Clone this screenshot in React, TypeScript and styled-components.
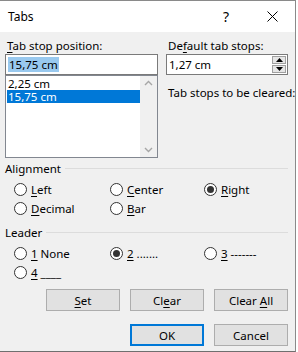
import styled, { createGlobalStyle } from "styled-components";

const Global = createGlobalStyle`
  html, body {
    margin: 0;
    padding: 0;
    background: #ffffff;
  }
  body {
    font-family: "Noto Sans", "Open Sans", sans-serif;
    font-size: 11.5px;
    color: #000000;
  }
`;

const Dialog = styled.div`
  width: 295px;
  height: 350px;
  border-top: 1px solid #8a8a8a;
  border-right: 1px solid #8a8a8a;
  border-bottom: 1px solid #6f6f6f;
  background: #f0f0f0;
  display: flex;
  flex-direction: column;
  overflow: hidden;
`;

const TitleBar = styled.div`
  height: 31px;
  background: #ffffff;
  display: flex;
  align-items: center;
  padding-left: 8px;
  font-size: 12px;
`;

const TitleText = styled.div`
  flex: 1;
`;

const TitleButton = styled.div`
  width: 46px;
  height: 31px;
  display: flex;
  align-items: center;
  justify-content: center;
  font-size: 14px;
`;

const Content = styled.div`
  padding: 6px 7px 0 5px;
  display: flex;
  flex-direction: column;
`;

const TopRow = styled.div`
  display: flex;
  gap: 8px;
`;

const Column = styled.div<{ $w: number }>`
  width: ${(p) => p.$w}px;
  display: flex;
  flex-direction: column;
`;

const Label = styled.div<{ $mt?: number }>`
  height: 15px;
  line-height: 15px;
  margin-bottom: 1px;
  margin-top: ${(p) => p.$mt || 0}px;
  padding-left: 2px;
  white-space: nowrap;
`;

const U = styled.span`
  text-decoration: underline;
  text-underline-offset: 2px;
`;

const TextBox = styled.div`
  height: 19px;
  border: 1px solid #7a7a7a;
  background: #ffffff;
  display: flex;
  align-items: center;
  padding-left: 2px;
`;

const Selected = styled.span`
  background: #99c9ef;
  line-height: 15px;
  padding: 0 1px;
`;

const ListBox = styled.div`
  height: 81px;
  border: 1px solid #828790;
  background: #ffffff;
  display: flex;
`;

const ListItems = styled.div`
  flex: 1;
  padding: 1px 0 0 1px;
  display: flex;
  flex-direction: column;
`;

const ListItem = styled.div<{ $sel?: boolean }>`
  height: 13px;
  line-height: 13px;
  padding-left: 1px;
  background: ${(p) => (p.$sel ? "#0078d7" : "transparent")};
  color: ${(p) => (p.$sel ? "#ffffff" : "#000000")};
`;

const ScrollBar = styled.div`
  width: 17px;
  background: #f0f0f0;
  display: flex;
  flex-direction: column;
  justify-content: space-between;
  align-items: center;
  padding: 4px 0;
`;

const SpinBox = styled(TextBox)`
  justify-content: space-between;
  padding-right: 1px;
`;

const SpinButtons = styled.div`
  width: 14px;
  height: 17px;
  display: flex;
  flex-direction: column;
  gap: 1px;
`;

const SpinButton = styled.div`
  flex: 1;
  border: 1px solid #a0a0a0;
  background: #e6e6e6;
  display: flex;
  align-items: center;
  justify-content: center;
`;

const GroupHeader = styled.div<{ $mt: number }>`
  margin-top: ${(p) => p.$mt}px;
  height: 15px;
  line-height: 15px;
  display: flex;
  align-items: center;
  gap: 4px;
  white-space: nowrap;
  &::after {
    content: "";
    flex: 1;
    height: 1px;
    background: #dcdcdc;
  }
`;

const RadioGrid = styled.div<{ $mt: number }>`
  margin-top: ${(p) => p.$mt}px;
  padding-left: 9px;
  display: grid;
  grid-template-columns: 96px 94px 1fr;
  grid-auto-rows: 19px;
`;

const RadioItem = styled.div`
  display: flex;
  align-items: center;
  gap: 4px;
  white-space: nowrap;
`;

const RadioCircle = styled.div<{ $on?: boolean }>`
  width: 11px;
  height: 11px;
  border: 1px solid #333333;
  border-radius: 50%;
  background: #ffffff;
  display: flex;
  align-items: center;
  justify-content: center;
  &::after {
    content: "";
    width: 7px;
    height: 7px;
    border-radius: 50%;
    background: ${(p) => (p.$on ? "#333333" : "transparent")};
  }
`;

const ButtonRow = styled.div<{ $mt: number }>`
  margin-top: ${(p) => p.$mt}px;
  display: flex;
  justify-content: flex-end;
  gap: 10px;
`;

const Button = styled.div<{ $def?: boolean }>`
  width: ${(p) => (p.$def ? 70 : 72)}px;
  height: ${(p) => (p.$def ? 18 : 20)}px;
  border: ${(p) => (p.$def ? "2px solid #0078d7" : "1px solid #adadad")};
  background: #e1e1e1;
  display: flex;
  align-items: center;
  justify-content: center;
  white-space: pre;
`;

const Chevron = ({ up }: { up?: boolean }) => (
  <svg width="9" height="6" viewBox="0 0 9 6">
    <path
      d={up ? "M1 5 L4.5 1.5 L8 5" : "M1 1 L4.5 4.5 L8 1"}
      fill="none"
      stroke="#a6a6a6"
      strokeWidth="1.4"
    />
  </svg>
);

const Tri = ({ up }: { up?: boolean }) => (
  <svg width="7" height="4" viewBox="0 0 7 4">
    <path d={up ? "M0 4 L3.5 0 L7 4 Z" : "M0 0 L3.5 4 L7 0 Z"} fill="#000" />
  </svg>
);

const Radio = ({ on, children }: { on?: boolean; children: React.ReactNode }) => (
  <RadioItem>
    <RadioCircle $on={on} />
    <span>{children}</span>
  </RadioItem>
);

export default function App() {
  return (
    <>
      <Global />
      <Dialog>
        <TitleBar>
          <TitleText>Tabs</TitleText>
          <TitleButton>?</TitleButton>
          <TitleButton>
            <svg width="11" height="11" viewBox="0 0 11 11">
              <path d="M0.5 0.5 L10.5 10.5 M10.5 0.5 L0.5 10.5" stroke="#000" strokeWidth="1" />
            </svg>
          </TitleButton>
        </TitleBar>
        <Content>
          <TopRow>
            <Column $w={153}>
              <Label>
                <U>T</U>ab stop position:
              </Label>
              <TextBox>
                <Selected>15,75 cm</Selected>
              </TextBox>
              <ListBox>
                <ListItems>
                  <ListItem>2,25 cm</ListItem>
                  <ListItem $sel>15,75 cm</ListItem>
                </ListItems>
                <ScrollBar>
                  <Chevron up />
                  <Chevron />
                </ScrollBar>
              </ListBox>
            </Column>
            <Column $w={122}>
              <Label>
                De<U>f</U>ault tab stops:
              </Label>
              <SpinBox>
                <span>1,27 cm</span>
                <SpinButtons>
                  <SpinButton>
                    <Tri up />
                  </SpinButton>
                  <SpinButton>
                    <Tri />
                  </SpinButton>
                </SpinButtons>
              </SpinBox>
              <Label $mt={10}>Tab stops to be cleared:</Label>
            </Column>
          </TopRow>

          <GroupHeader $mt={3}>Alignment</GroupHeader>
          <RadioGrid $mt={4}>
            <Radio>
              <U>L</U>eft
            </Radio>
            <Radio>
              <U>C</U>enter
            </Radio>
            <Radio on>
              <U>R</U>ight
            </Radio>
            <Radio>
              <U>D</U>ecimal
            </Radio>
            <Radio>
              <U>B</U>ar
            </Radio>
          </RadioGrid>

          <GroupHeader $mt={7}>Leader</GroupHeader>
          <RadioGrid $mt={4}>
            <Radio>
              <U>1</U> None
            </Radio>
            <Radio on>
              <U>2</U> .......
            </Radio>
            <Radio>
              <U>3</U> -------
            </Radio>
            <Radio>
              <U>4</U> ____
            </Radio>
          </RadioGrid>

          <ButtonRow $mt={7}>
            <Button>
              <span>
                <U>S</U>et
              </span>
            </Button>
            <Button>
              <span>
                Cl<U>e</U>ar
              </span>
            </Button>
            <Button>
              <span>
                Clear <U>A</U>ll
              </span>
            </Button>
          </ButtonRow>
          <ButtonRow $mt={13}>
            <Button $def>OK</Button>
            <Button>Cancel</Button>
          </ButtonRow>
        </Content>
      </Dialog>
    </>
  );
}
